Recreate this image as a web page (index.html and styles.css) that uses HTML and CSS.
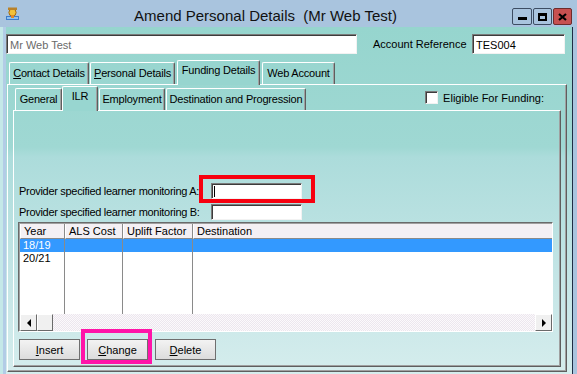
FILE: index.html
```html
<!DOCTYPE html>
<html lang="en">
<head>
    <meta charset="UTF-8">
    <meta name="viewport" content="width=device-width, initial-scale=1.0">
    <title>Amend Personal Details</title>
    <link rel="stylesheet" href="styles.css">
</head>
<body>
    <div class="window">
        <div class="titlebar">
            <svg class="app-icon" viewBox="0 0 15 15">
                <rect x="1" y="10" width="13" height="4" fill="#3d7cc9"/>
                <rect x="2" y="11" width="11" height="2" fill="#8fc1f0"/>
                <circle cx="7.5" cy="6.5" r="3.6" fill="#f2c23a" stroke="#a26a12" stroke-width="1"/>
                <rect x="3" y="1.5" width="9" height="2.5" fill="#b9822a"/>
                <rect x="6" y="9" width="3" height="3" fill="#e08a2a"/>
            </svg>
            <div class="title">Amend Personal Details&nbsp; (Mr Web Test)</div>
            <div class="controls">
                <span class="ctl ctl-min"><i></i></span>
                <span class="ctl ctl-max"><i></i></span>
                <span class="ctl ctl-close">
                    <svg viewBox="0 0 9 8" width="9" height="8">
                        <path d="M1 1 L8 7 M8 1 L1 7" stroke="#000" stroke-width="2.2"/>
                    </svg>
                </span>
            </div>
        </div>
        <div class="client">
            <div class="top-row">
                <div class="field name-field">Mr Web Test</div>
                <span class="ref-label">Account Reference</span>
                <div class="field ref-field">TES004</div>
            </div>
            <div class="tabs">
                <div class="tab tab-contact"><u>C</u>ontact Details</div>
                <div class="tab tab-personal"><u>P</u>ersonal Details</div>
                <div class="tab tab-funding active">Funding Details</div>
                <div class="tab tab-web">Web Account</div>
            </div>
            <div class="panel">
                <div class="subtab-row">
                    <div class="tab sub tab-general">General</div>
                    <div class="tab sub tab-ilr active">ILR</div>
                    <div class="tab sub tab-employment">Employment</div>
                    <div class="tab sub tab-destination">Destination and Progression</div>
                    <div class="eligible"><span class="check"></span>Eligible For Funding:</div>
                </div>
                <div class="subpanel">
                    <div class="monitor-row">
                        <span class="monitor-label">Provider specified learner monitoring A:</span>
                        <div class="field small-field mark-red"><span class="caret"></span></div>
                    </div>
                    <div class="monitor-row">
                        <span class="monitor-label">Provider specified learner monitoring B:</span>
                        <div class="field small-field"></div>
                    </div>
                    <div class="grid">
                        <div class="grid-body">
                            <div class="col col-year">
                                <div class="head">Year</div>
                                <div class="cell selected">18/19</div>
                                <div class="cell">20/21</div>
                            </div>
                            <div class="col col-als">
                                <div class="head">ALS Cost</div>
                                <div class="cell selected"></div>
                                <div class="cell"></div>
                            </div>
                            <div class="col col-uplift">
                                <div class="head">Uplift Factor</div>
                                <div class="cell selected"></div>
                                <div class="cell"></div>
                            </div>
                            <div class="col col-dest">
                                <div class="head">Destination</div>
                                <div class="cell selected"></div>
                                <div class="cell"></div>
                            </div>
                        </div>
                        <div class="hscroll">
                            <span class="sb-btn"><span class="arrow-left"></span></span>
                            <span class="sb-btn sb-thumb"></span>
                            <span class="sb-track"></span>
                            <span class="sb-btn"><span class="arrow-right"></span></span>
                        </div>
                    </div>
                    <div class="buttons">
                        <button class="btn"><u>I</u>nsert</button>
                        <button class="btn mark-pink"><u>C</u>hange</button>
                        <button class="btn"><u>D</u>elete</button>
                    </div>
                </div>
            </div>
        </div>
    </div>
</body>
</html>
```

FILE: styles.css
```css
body {
    margin: 0;
    font-family: "Liberation Sans", Arial, sans-serif;
    font-size: 11px;
    color: #000;
    background: #a9c4de;
}
.window {
    width: 577px;
    height: 374px;
    display: flex;
    flex-direction: column;
    background: #a9c4de;
    overflow: hidden;
}
.titlebar {
    height: 27px;
    flex-shrink: 0;
    display: flex;
    align-items: flex-start;
}
.app-icon {
    width: 15px;
    height: 15px;
    margin: 6px 0 0 5px;
}
.title {
    flex: 1;
    text-align: center;
    font-size: 15px;
    line-height: 17px;
    margin-top: 7px;
    color: #111;
    white-space: nowrap;
}
.controls {
    display: flex;
    margin: 8px 5px 0 0;
}
.ctl {
    width: 19px;
    height: 17px;
    box-sizing: border-box;
    border: 1px solid #3d4d63;
    border-radius: 2px;
    background: #a9c4de;
    display: flex;
    justify-content: center;
    align-items: center;
    margin-left: 1px;
}
.ctl-min {
    width: 20px;
    align-items: flex-end;
}
.ctl-min i {
    width: 9px;
    height: 3px;
    background: #000;
    margin-bottom: 4px;
}
.ctl-max i {
    width: 5px;
    height: 3px;
    border: 2px solid #000;
    border-top-width: 3px;
}
.ctl-close {
    background: #c75050;
    border-color: #6e2b2b;
}
.client {
    flex: 1;
    margin-right: 4px;
    border-right: 1px solid #1f2d44;
    background:
        linear-gradient(90deg, #c4e8e8 0 3px, #b2cce6 3px 6px, transparent 6px),
        linear-gradient(#96d5ce 0px, #9fd8d3 120px, #acdcdb 130px, #c4e5e6 250px, #d5eded 347px);
    display: flex;
    flex-direction: column;
}
.top-row {
    display: flex;
    align-items: center;
    height: 20px;
    margin-top: 7px;
    padding-left: 6px;
}
.field {
    height: 20px;
    box-sizing: border-box;
    background: #fff;
    border: 1px solid;
    border-color: #7a7a7a #f2f2f2 #f2f2f2 #7a7a7a;
    box-shadow: inset 1px 1px 0 #3c3c3c;
    padding: 3px 0 0 3px;
    line-height: 14px;
}
.name-field {
    width: 351px;
    color: #6a6a6a;
}
.ref-label {
    margin-left: 16px;
    width: 99px;
    white-space: nowrap;
}
.ref-field {
    width: 93px;
}
.tabs {
    display: flex;
    align-items: flex-end;
    height: 24px;
    margin-top: 6px;
    padding-left: 9px;
    position: relative;
    z-index: 1;
}
.tab {
    height: 22px;
    box-sizing: border-box;
    padding: 0 2px;
    line-height: 21px;
    text-align: center;
    border-top: 1px solid #fff;
    border-left: 1px solid #fff;
    border-right: 1px solid #5e5e5e;
    box-shadow: inset -1px 0 #a0a0a0;
    border-radius: 2px 2px 0 0;
    margin-right: 1px;
    white-space: nowrap;
    letter-spacing: -0.2px;
}
.tab.active {
    height: 25px;
    margin: 0 2px -1px 1px;
    padding-bottom: 4px;
    line-height: 18px;
    background: #97d5cf;
}
.tab-contact { width: 80px; }
.tab-personal { width: 85px; }
.tab-funding { width: 83px; }
.tab-web { width: 73px; }
.panel {
    margin-left: 7px;
    width: 560px;
    height: 288px;
    box-sizing: border-box;
    border-top: 1px solid #fff;
    border-left: 1px solid #fff;
    border-right: 1px solid #5e5e5e;
    border-bottom: 1px solid #5e5e5e;
    box-shadow: inset -1px -1px 0 #a0a0a0;
    display: flex;
    flex-direction: column;
}
.subtab-row {
    display: flex;
    align-items: flex-end;
    height: 25px;
    padding-left: 7px;
    position: relative;
    z-index: 1;
}
.tab.sub.active {
    background: #98d6d0;
    margin: 0 1px -1px 0;
}
.tab-general { width: 47px; margin-right: 0; }
.tab-ilr { width: 36px; }
.tab-employment { width: 66px; }
.tab-destination { width: 140px; }
.eligible {
    margin-left: auto;
    margin-right: 22px;
    align-self: center;
    display: flex;
    align-items: center;
}
.check {
    width: 13px;
    height: 13px;
    box-sizing: border-box;
    background: #fff;
    border: 1px solid;
    border-color: #7a7a7a #f2f2f2 #f2f2f2 #7a7a7a;
    box-shadow: inset 1px 1px 0 #3c3c3c;
    margin-right: 5px;
}
.subpanel {
    margin: 0 5px 0 5px;
    height: 257px;
    box-sizing: border-box;
    border-top: 1px solid #fff;
    border-left: 1px solid #fff;
    border-right: 1px solid #5e5e5e;
    border-bottom: 1px solid #5e5e5e;
    box-shadow: inset -1px -1px 0 #a0a0a0;
    padding: 72px 0 0 5px;
    display: flex;
    flex-direction: column;
}
.monitor-row {
    display: flex;
    align-items: center;
    height: 16px;
    margin-bottom: 5px;
}
.monitor-label {
    width: 192px;
    white-space: nowrap;
    letter-spacing: -0.3px;
}
.small-field {
    width: 91px;
    height: 16px;
    padding: 2px 0 0 2px;
}
.caret {
    display: block;
    width: 1px;
    height: 11px;
    background: #000;
}
.mark-red {
    position: relative;
}
.mark-red::after {
    content: "";
    position: absolute;
    left: -13px;
    top: -9px;
    right: -14px;
    bottom: -5px;
    border: 4px solid #f7000f;
}
.grid {
    margin: -3px 0 0 -1px;
    width: 535px;
    height: 110px;
    box-sizing: border-box;
    background: #fff;
    border-top: 1px solid #6a6a6a;
    border-left: 1px solid #6a6a6a;
    border-right: 1px solid #fff;
    border-bottom: 1px solid #fff;
    display: flex;
    flex-direction: column;
}
.grid-body {
    flex: 1;
    display: flex;
    border-top: 1px solid #a0a0a0;
    border-left: 1px solid #a0a0a0;
}
.col {
    box-sizing: border-box;
    border-right: 1px solid #8a8a8a;
}
.col-year { width: 45px; }
.col-als { width: 58px; }
.col-uplift { width: 70px; }
.col-dest { flex: 1; border-right: none; }
.head {
    height: 15px;
    box-sizing: border-box;
    background: #f4f0f4;
    border-bottom: 1px solid #8a8a8a;
    border-left: 1px solid #fff;
    padding-left: 3px;
    line-height: 14px;
}
.cell {
    height: 13px;
    line-height: 13px;
    padding-left: 3px;
}
.cell.selected {
    background: #3399ff;
    color: #fff;
}
.hscroll {
    height: 17px;
    display: flex;
    border-left: 1px solid #a0a0a0;
}
.sb-btn {
    width: 17px;
    height: 17px;
    box-sizing: border-box;
    background: #f0f0f0;
    border: 1px solid;
    border-color: #fff #6a6a6a #6a6a6a #fff;
    display: flex;
    justify-content: center;
    align-items: center;
}
.sb-thumb {
    width: 16px;
}
.sb-track {
    flex: 1;
    background: repeating-conic-gradient(#fbf9fb 0 25%, #ece6ee 0 50%) 0 0 / 2px 2px;
}
.arrow-left {
    border-top: 4px solid transparent;
    border-bottom: 4px solid transparent;
    border-right: 4px solid #000;
}
.arrow-right {
    border-top: 4px solid transparent;
    border-bottom: 4px solid transparent;
    border-left: 4px solid #000;
}
.buttons {
    display: flex;
    gap: 7px;
    margin-top: 7px;
}
.btn {
    width: 61px;
    height: 21px;
    box-sizing: border-box;
    border: 1px solid #6f6f6f;
    background: linear-gradient(#f3f3f3, #dcdcdc);
    font-family: "Liberation Sans", Arial, sans-serif;
    font-size: 11px;
    padding: 0;
    color: #000;
}
.mark-pink {
    position: relative;
}
.mark-pink::after {
    content: "";
    position: absolute;
    left: -7px;
    top: -11px;
    right: -5px;
    bottom: -5px;
    border: 4px solid #ff14a8;
}
```
